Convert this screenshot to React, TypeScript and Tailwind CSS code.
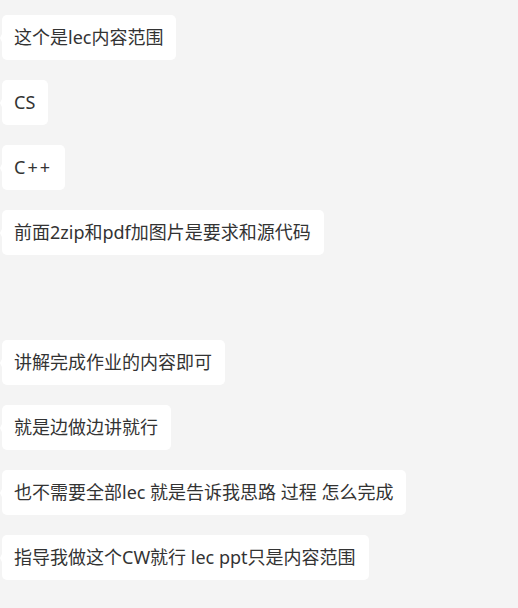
import React from "react";

const msgs = [
  "这个是lec内容范围",
  "CS",
  "C++",
  "前面2zip和pdf加图片是要求和源代码",
  "讲解完成作业的内容即可",
  "就是边做边讲就行",
  "也不需要全部lec 就是告诉我思路 过程 怎么完成",
  "指导我做这个CW就行 lec ppt只是内容范围",
];

export default function App() {
  return (
    <div
      className="w-[518px] h-[608px] bg-[#f4f4f4] pt-[15px] pl-[2px] flex flex-col items-start gap-5 overflow-hidden"
      style={{ fontFamily: '"Noto Sans", "Noto Sans CJK SC", sans-serif' }}
    >
      {msgs.map((m, i) => (
        <div
          key={i}
          className={`relative bg-white rounded-[5px] pl-3 pr-[13px] h-[45px] flex items-center text-[18px] text-[#333333] whitespace-pre ${i === 4 ? "mt-[65px]" : ""}`}
        >
          <span className="absolute left-[-2px] top-[19px] w-0 h-0 border-y-[4px] border-y-transparent border-r-[2px] border-r-white" />
          {m === "C++" ? <span className="tracking-[2px]">C++</span> : m}
        </div>
      ))}
    </div>
  );
}
